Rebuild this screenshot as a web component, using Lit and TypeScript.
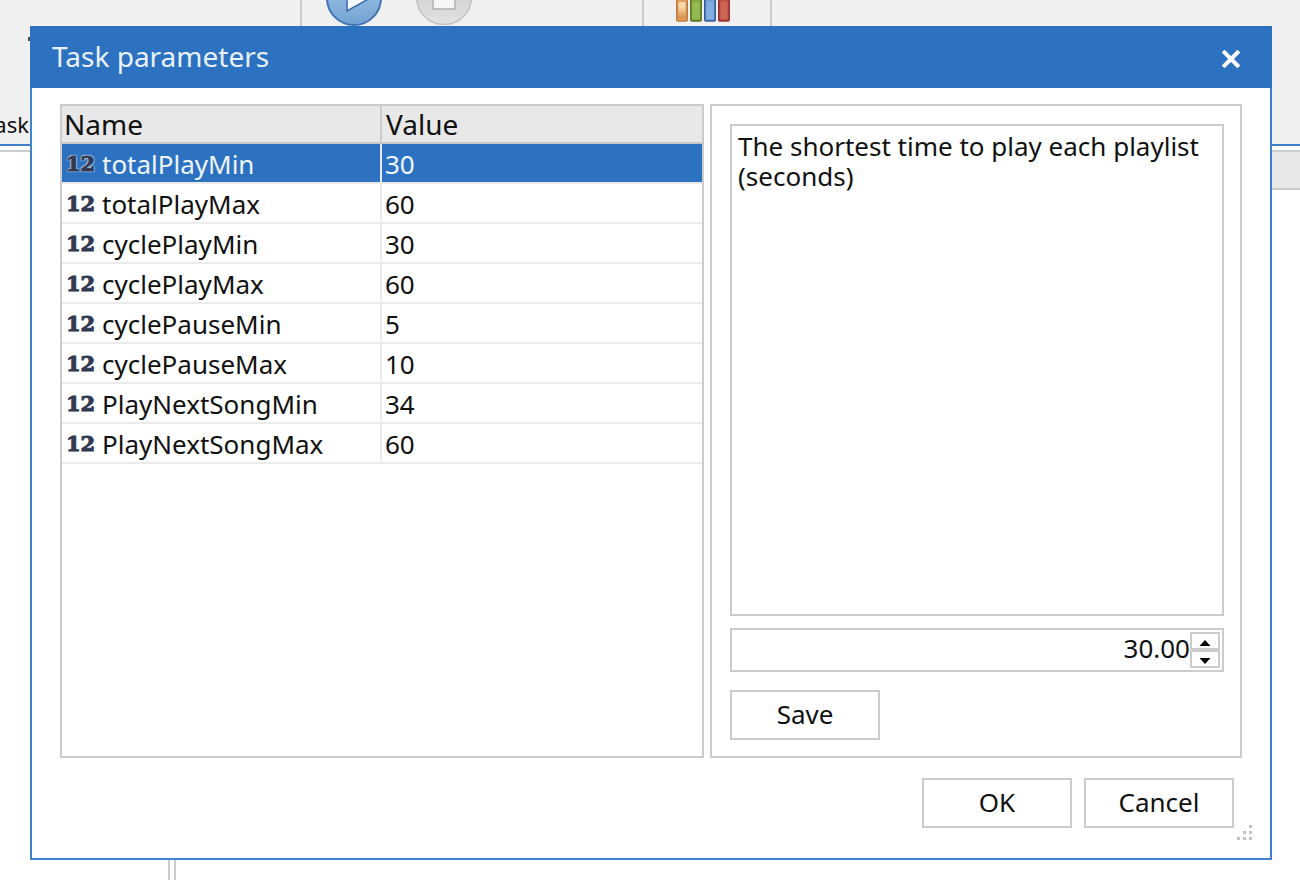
import { LitElement, html, css, svg } from "lit";
import { customElement, property, state } from "lit/decorators.js";
import { classMap } from "lit/directives/class-map.js";

interface Param {
  name: string;
  value: number;
  hint: string;
}

const PARAMS: Param[] = [
  { name: "totalPlayMin", value: 30, hint: "The shortest time to play each playlist (seconds)" },
  { name: "totalPlayMax", value: 60, hint: "" },
  { name: "cyclePlayMin", value: 30, hint: "" },
  { name: "cyclePlayMax", value: 60, hint: "" },
  { name: "cyclePauseMin", value: 5, hint: "" },
  { name: "cyclePauseMax", value: 10, hint: "" },
  { name: "PlayNextSongMin", value: 34, hint: "" },
  { name: "PlayNextSongMax", value: 60, hint: "" },
];

/** The main window behind the dialog: ribbon on top, two panes below. */
@customElement("main-window")
export class MainWindow extends LitElement {
  static styles = css`
    :host {
      display: flex;
      flex-direction: column;
      min-height: 100vh;
      background: #fff;
      font-family: "Noto Sans", sans-serif;
    }
    .ribbon {
      display: flex;
      height: 144px;
      background: #f0f0f0;
      border-bottom: 2px solid #3f7fc9;
    }
    .group {
      box-sizing: border-box;
      display: flex;
      align-items: flex-start;
      border-right: 2px solid #ccc;
    }
    .group.task {
      width: 302px;
    }
    .group.run {
      width: 342px;
      padding-left: 24px;
      gap: 30px;
    }
    .group.stats {
      width: 128px;
      padding-left: 32px;
    }
    .tool {
      display: flex;
      padding: 0;
      border: 0;
      background: none;
      font: inherit;
      color: #111;
    }
    .tool.clipped {
      width: 30px;
      height: 142px;
      padding-top: 32px;
      flex-direction: column;
      align-items: flex-end;
      justify-content: space-between;
      overflow: hidden;
    }
    .caption {
      padding-right: 1px;
      font-size: 22px;
      line-height: 36px;
    }
    .panes {
      flex: 1;
      display: flex;
      gap: 4px;
      padding-top: 4px;
    }
    .side {
      box-sizing: border-box;
      width: 170px;
      border-top: 2px solid #ccc;
      border-right: 2px solid #ccc;
    }
    .content {
      flex: 1;
      border-top: 2px solid #ccc;
      border-left: 2px solid #ccc;
    }
    .content-head {
      height: 36px;
      background: #e8e8e8;
      border-bottom: 2px solid #ccc;
    }
  `;

  render() {
    return html`
      <header class="ribbon">
        <div class="group task">
          <button class="tool clipped">
            <svg width="2" height="10" viewBox="0 0 2 10" aria-hidden="true">
              <path d="M0 5h2v4H0z" fill="#444c5c" />
            </svg>
            <span class="caption">Task</span>
          </button>
        </div>
        <div class="group run">
          <button class="tool" aria-label="Play">
            <svg width="56" height="27" viewBox="0 0 56 27">
              <defs>
                <linearGradient id="blue" x1="0" y1="0" x2="0" y2="1">
                  <stop offset="0.5" stop-color="#8db7de" />
                  <stop offset="1" stop-color="#72a2d3" />
                </linearGradient>
              </defs>
              <circle cx="28" cy="-2" r="27" fill="url(#blue)" stroke="#4273b5" stroke-width="2" />
              <path d="M21 -18V11L46 -3Z" fill="#f6f8fb" stroke="#3b68aa" stroke-width="1.5" />
            </svg>
          </button>
          <button class="tool" aria-label="Stop">
            <svg width="64" height="27" viewBox="-4 0 64 27">
              <defs>
                <linearGradient id="grey" x1="0" y1="0" x2="0" y2="1">
                  <stop offset="0.5" stop-color="#d4d4d4" />
                  <stop offset="1" stop-color="#e2e2e2" />
                </linearGradient>
              </defs>
              <circle cx="28" cy="-3" r="27.5" fill="url(#grey)" stroke="#c4c4c4" stroke-width="1.5" />
              <path d="M17 -16H39V9H17Z" fill="#f5f5f5" stroke="#b2b2b2" stroke-width="1.5" />
            </svg>
          </button>
        </div>
        <div class="group stats">
          <button class="tool" aria-label="Statistics">
            <svg width="54" height="24" viewBox="0 0 54 24">
              <defs>
                <linearGradient id="orange" x1="0" y1="0" x2="0" y2="1">
                  <stop offset="0.3" stop-color="#fbe6c0" />
                  <stop offset="0.9" stop-color="#dc8f45" />
                </linearGradient>
              </defs>
              ${this.bar(0, "#c27a3c", "#e0a060", "url(#orange)")}
              ${this.bar(14, "#54762a", "#86a945", "#9bbd58")}
              ${this.bar(28, "#36589c", "#6f9fd4", "#86b2e0")}
              ${this.bar(42, "#962f30", "#c0503f", "#cf6a5a")}
            </svg>
          </button>
        </div>
      </header>
      <div class="panes">
        <div class="side"></div>
        <div class="content"><div class="content-head"></div></div>
      </div>
    `;
  }

  private bar(x: number, edge: string, fill: string, shine: string) {
    return svg`
      <rect x=${x + 0.75} y="-6" width="10.5" height="27" rx="1" fill=${fill} stroke=${edge} stroke-width="1.5" />
      <rect x=${x + 2.5} y="2" width="7" height="17" fill=${shine} opacity="0.8" />
    `;
  }
}

/** Modal dialog that edits the numeric parameters of a task. */
@customElement("task-parameters")
export class TaskParameters extends LitElement {
  static styles = css`
    :host {
      box-sizing: border-box;
      display: flex;
      flex-direction: column;
      border: 2px solid #4083cc;
      background: #fff;
      color: #111;
      font: 26px/30px "Noto Sans", sans-serif;
    }
    .title-bar {
      display: flex;
      align-items: center;
      justify-content: space-between;
      box-sizing: border-box;
      margin: -2px -2px 0;
      height: 62px;
      padding: 0 32px 2px 22px;
      background: #2d72c1;
    }
    .title {
      margin: 0;
      font-size: 28px;
      font-weight: 400;
      color: #e8f1fb;
    }
    .close {
      display: flex;
      padding: 6px 0 0;
      border: 0;
      background: none;
    }
    .body {
      flex: 1;
      display: grid;
      grid-template-columns: 23fr 19fr;
      gap: 6px;
      padding: 16px 28px 20px;
    }
    .list,
    .editor {
      min-width: 0;
      border: 2px solid #ccc;
    }
    table {
      width: 100%;
      table-layout: fixed;
      border-collapse: separate;
      border-spacing: 0;
    }
    th,
    td {
      box-sizing: border-box;
      padding: 2px 3px 0;
      text-align: left;
      font-weight: 400;
      white-space: nowrap;
      border-bottom: 2px solid #ebebeb;
    }
    th {
      height: 38px;
      padding: 0 2px;
      background: #e8e8e8;
      border-bottom-color: #c6c6c6;
      font-size: 28px;
    }
    th + th {
      padding-left: 4px;
    }
    td {
      height: 40px;
    }
    th:first-child {
      border-right: 2px solid #ccc;
    }
    td:first-child {
      border-right: 2px solid #ebebeb;
    }
    .selected td {
      background: #2d72c1;
      background-clip: padding-box;
      color: #eef5fd;
    }
    .name {
      display: flex;
      align-items: center;
      gap: 6px;
    }
    .kind {
      width: 31px;
      text-align: center;
      font: 700 21px/28px "DejaVu Serif", serif;
      color: #323a52;
      -webkit-text-stroke: 1px #323a52;
    }
    .selected .kind {
      text-shadow: 1px 1px 1px #b9d3ee, -1px 1px 1px #b9d3ee, 1px -1px 1px #b9d3ee, -1px -1px 1px #b9d3ee;
    }
    .editor {
      display: flex;
      flex-direction: column;
      padding: 18px 16px 16px 18px;
    }
    .hint {
      box-sizing: border-box;
      flex: 1;
      width: 100%;
      margin: 0 0 12px;
      padding: 5px 6px;
      border: 2px solid #ccc;
      outline: 0;
      resize: none;
      overflow: hidden;
      background: #fff;
      color: inherit;
      font: inherit;
    }
    .number {
      display: flex;
      margin-bottom: 18px;
      padding: 2px;
      border: 2px solid #ccc;
    }
    .number input {
      flex: 1;
      min-width: 0;
      height: 36px;
      box-sizing: border-box;
      padding: 0 0 4px;
      border: 0;
      outline: 0;
      background: none;
      color: inherit;
      font: inherit;
      text-align: right;
      appearance: textfield;
    }
    .number input::-webkit-inner-spin-button {
      appearance: none;
      margin: 0;
    }
    .spin {
      display: flex;
      flex-direction: column;
    }
    .spin button {
      display: flex;
      align-items: center;
      justify-content: center;
      box-sizing: border-box;
      width: 30px;
      height: 18px;
      padding: 4px 0 0;
      border: 2px solid #ccc;
      background: #fff;
    }
    .push {
      box-sizing: border-box;
      width: 150px;
      height: 50px;
      padding: 0 0 2px;
      border: 2px solid #ccc;
      background: #fff;
      color: inherit;
      font: inherit;
    }
    .actions {
      display: flex;
      justify-content: flex-end;
      gap: 12px;
      padding: 0 36px 30px;
    }
    .grip {
      position: absolute;
      right: 17px;
      bottom: 17px;
    }
  `;

  @property({ attribute: false }) params: Param[] = PARAMS;
  @state() private index = 0;

  private step(delta: number) {
    this.params = this.params.map((p, i) => (i === this.index ? { ...p, value: p.value + delta } : p));
  }

  render() {
    const current = this.params[this.index];
    return html`
      <header class="title-bar">
        <h1 class="title" id="title">Task parameters</h1>
        <button class="close" aria-label="Close">
          <svg width="18" height="18" viewBox="0 0 18 18">
            <path d="M2.5 2.5L15.5 15.5M15.5 2.5L2.5 15.5" stroke="#fff" stroke-width="4" stroke-linecap="square" fill="none" />
          </svg>
        </button>
      </header>
      <div class="body">
        <div class="list">
          <table>
            <thead>
              <tr>
                <th scope="col">Name</th>
                <th scope="col">Value</th>
              </tr>
            </thead>
            <tbody>
              ${this.params.map(
                (p, i) => html`
                  <tr class=${classMap({ selected: i === this.index })} @click=${() => (this.index = i)}>
                    <td>
                      <div class="name"><span class="kind" aria-hidden="true">12</span><span>${p.name}</span></div>
                    </td>
                    <td>${p.value}</td>
                  </tr>
                `
              )}
            </tbody>
          </table>
        </div>
        <div class="editor">
          <textarea class="hint" readonly aria-label="Description" .value=${current.hint}></textarea>
          <div class="number">
            <input type="number" step="0.01" aria-label="Value" .value=${current.value.toFixed(2)} />
            <div class="spin">
              <button aria-label="Increase" @click=${() => this.step(1)}>
                <svg width="12" height="6" viewBox="0 0 12 6"><path d="M6 0L11.5 6H0.5Z" fill="#000" /></svg>
              </button>
              <button aria-label="Decrease" @click=${() => this.step(-1)}>
                <svg width="12" height="6" viewBox="0 0 12 6"><path d="M0.5 0H11.5L6 6Z" fill="#000" /></svg>
              </button>
            </div>
          </div>
          <button class="push">Save</button>
        </div>
      </div>
      <footer class="actions">
        <button class="push">OK</button>
        <button class="push">Cancel</button>
      </footer>
      <svg class="grip" width="16" height="16" viewBox="0 0 16 16" aria-hidden="true">
        <path
          d="M12 0h3v3h-3zM6 6h3v3H6zM12 6h3v3h-3zM0 12h3v3H0zM6 12h3v3H6zM12 12h3v3h-3z"
          fill="#c2c2c2"
        />
      </svg>
    `;
  }
}

@customElement("app-root")
export class AppRoot extends LitElement {
  static styles = css`
    :host {
      display: block;
      position: relative;
      min-height: 100vh;
      overflow: hidden;
    }
    .dialog {
      position: absolute;
      inset: 26px 28px 20px 30px;
    }
  `;

  render() {
    return html`
      <main-window></main-window>
      <task-parameters class="dialog" role="dialog" aria-label="Task parameters"></task-parameters>
    `;
  }
}
